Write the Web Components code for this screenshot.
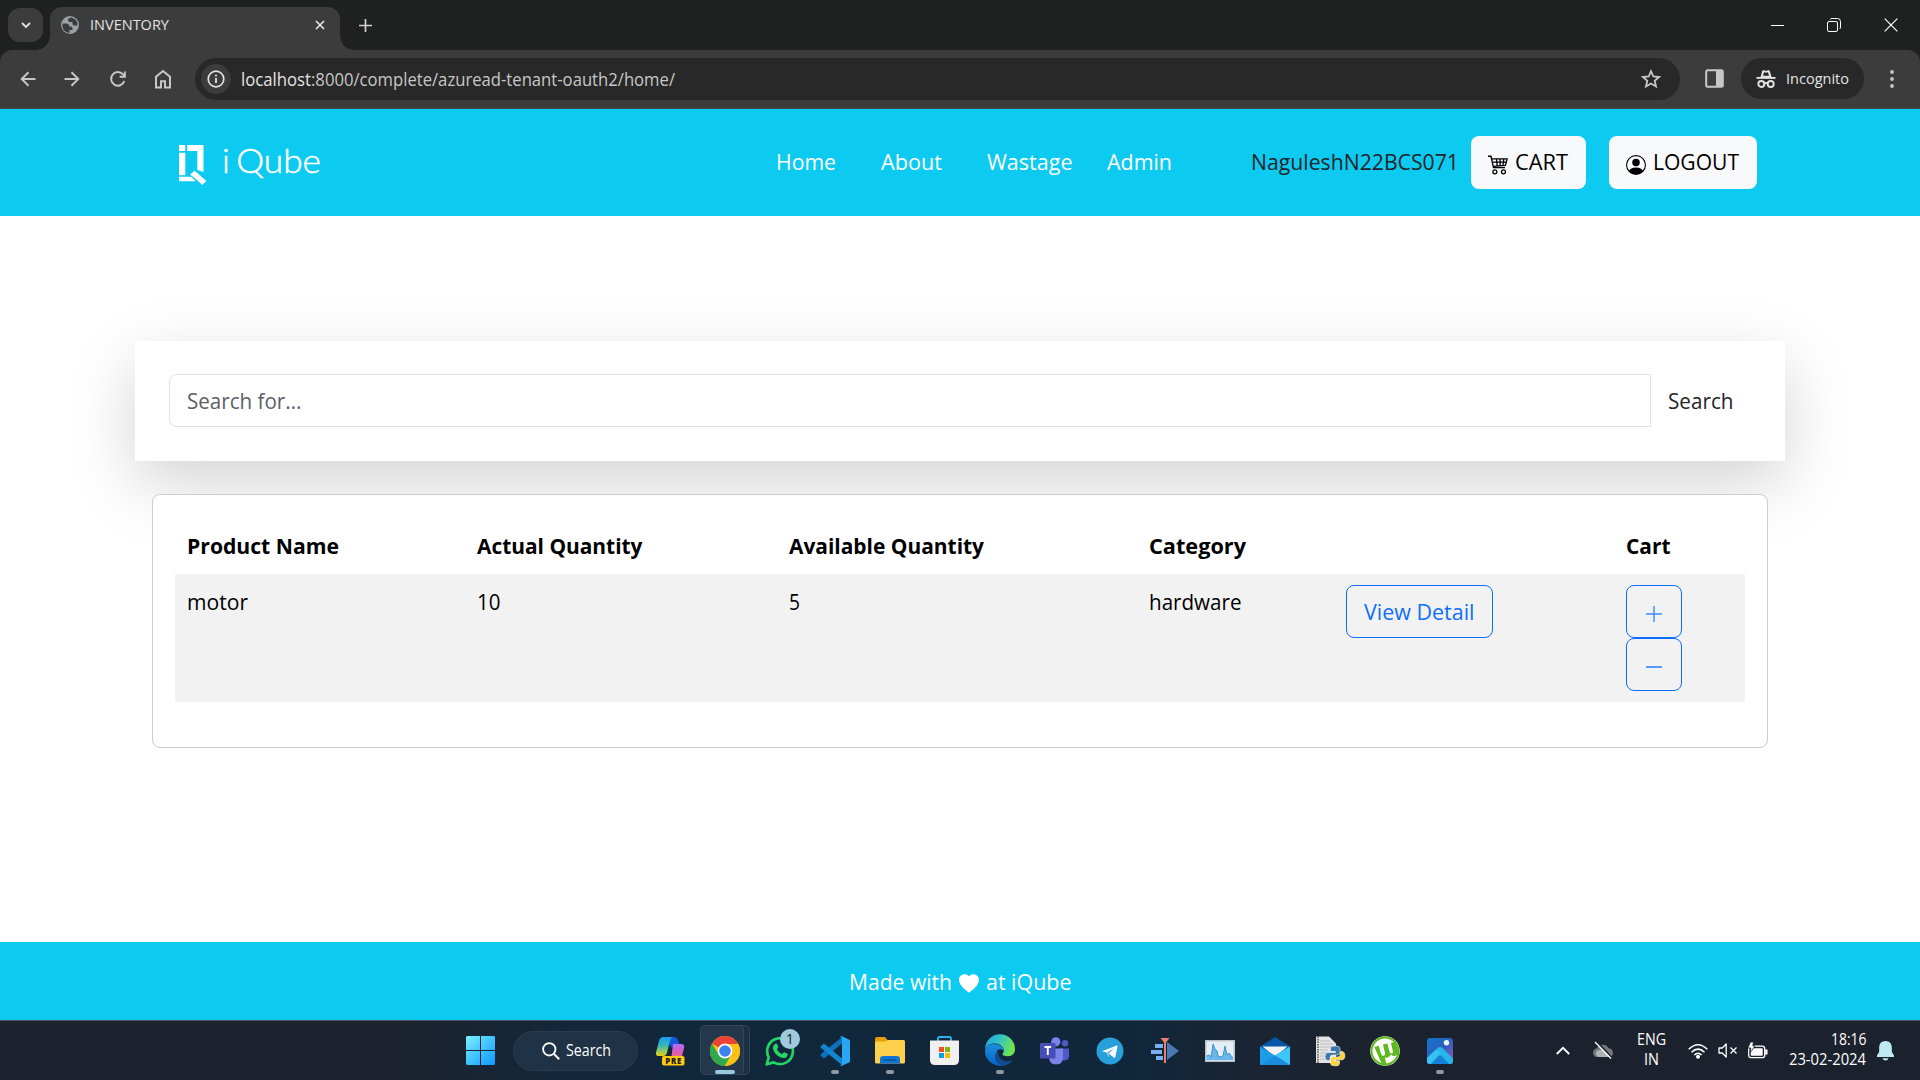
<!DOCTYPE html>
<html lang="en">
<head>
<meta charset="utf-8">
<title>INVENTORY</title>
<style>
html,body{margin:0;padding:0}
body{width:1920px;height:1080px;overflow:hidden;background:#fff;font-family:"Open Sans","Noto Sans",sans-serif}
</style>
</head>
<body>
<app-desktop></app-desktop>
<script>
const make = (name, html, init) => {
  const t = document.createElement('template');
  t.innerHTML = html;
  customElements.define(name, class extends HTMLElement {
    connectedCallback() {
      if (this.shadowRoot) return;
      this.attachShadow({mode: 'open'}).append(t.content.cloneNode(true));
      if (init) init.call(this, this.shadowRoot);
    }
  });
};

/* name: [viewBox width, viewBox height, markup]; drawn at that size unless w/h are given */
const ICONS = {
  chev: [10, 7, '<path d="M1 1l4 4 4-4" fill="none" stroke="#e3e3e3" stroke-width="1.8"/>'],
  globe: [18, 18, '<circle cx="9" cy="9" r="9" fill="#9aa0a6"/><path d="M1.800 7.500h3.700q2.500 0 2.500 2v1h2q1.500.3 1.500 2v1.500H8.500V17Q2 16.300 1.200 9.500zM10.500 1.500Q7 2 7 4t2 2h2.500v2q.3 1.500 2 1.500h3q.5-6-6-8z" fill="#3c3c3c"/>'],
  x: [10, 10, '<path d="M1 1l8 8M9 1l-8 8" stroke="#e3e3e3" stroke-width="1.7"/>'],
  plus: [13, 13, '<path d="M6.500 0v13M0 6.500h13" stroke="#d0d0d0" stroke-width="1.700"/>'],
  min: [13, 13, '<path d="M0 6.500h13" stroke="#fff"/>'],
  max: [14, 14, '<rect x=".5" y="3.500" width="10" height="10" rx="1.500" fill="none" stroke="#fff"/><path d="M3 1.500q.5-1 2-1h5.500q3 0 3 3V9q0 1.500-1 2" fill="none" stroke="#fff"/>'],
  close: [14, 14, '<path d="M.7.7l12.600 12.600M13.300.7L.7 13.300" stroke="#fff" stroke-width="1.200"/>'],
  back: [16, 16, '<path d="M15.500 8H2M8.500 1.300L1.700 8l6.800 6.700" fill="none" stroke="#c7c7c7" stroke-width="1.900"/>'],
  fwd: [16, 16, '<path d="M.5 8H14M7.500 1.300L14.300 8l-6.800 6.700" fill="none" stroke="#c7c7c7" stroke-width="1.900"/>'],
  reload: [18, 18, '<path d="M15.300 11.200A6.800 6.800 0 1 1 14 4.400l2 2" fill="none" stroke="#c7c7c7" stroke-width="2"/><path d="M16.800 1.500v6.200h-6.200v-1.900h4.300V1.500z" fill="#c7c7c7"/>'],
  home: [18, 20, '<path d="M2 18.500V7.700L9 2l7 5.700v10.800h-5v-6.300H7v6.300z" fill="none" stroke="#c7c7c7" stroke-width="2"/>'],
  info: [18, 18, '<circle cx="9" cy="9" r="7.800" fill="none" stroke="#e3e3e3" stroke-width="1.700"/><path d="M9 8v5M9 4.700v1.900" stroke="#e3e3e3" stroke-width="1.800"/>'],
  star: [20, 20, '<path d="M10 2.200l2.300 5.300 5.800.5-4.400 3.800 1.300 5.700-5-3-5 3 1.300-5.700L1.900 8l5.800-.5z" fill="none" stroke="#c7c7c7" stroke-width="1.800"/>'],
  panel: [19, 19, '<rect x="1.200" y="1.200" width="16.600" height="16.600" rx="1.500" fill="none" stroke="#c7c7c7" stroke-width="2"/><path d="M11 1h7v17h-7z" fill="#c7c7c7"/>'],
  incog: [20, 20, '<path d="M4.500 8l1.700-6Q6.600.8 8 1.300l2 .6 2-.6q1.400-.5 1.800.7l1.700 6z" fill="#e3e3e3"/><path d="M8 3.200l2 .6 2-.6 1 3.600H7z" fill="#282828"/><path d="M.5 8.900h19" stroke="#e3e3e3" stroke-width="1.900"/><g fill="none" stroke="#e3e3e3" stroke-width="1.900"><circle cx="5.300" cy="15" r="3"/><circle cx="14.700" cy="15" r="3"/><path d="M8.200 14.600q1.800-1.200 3.600 0"/></g>'],
  dots: [4, 18, '<g fill="#c7c7c7"><circle cx="2" cy="2" r="1.900"/><circle cx="2" cy="9" r="1.900"/><circle cx="2" cy="16" r="1.900"/></g>'],
  mark: [28, 40, '<path d="M0 0h6.300v6H0zM0 7.800h6.300v22.500H0zM8.200 0H24.500v27l-6.200-2V6H8.200zM0 31.800h12l5 4.500H0z" fill="#fff"/><path d="M11 29.500l4.500-3.700 4 3.200 7.800 7-4 4-6-5.500z" fill="#fff"/>'],
  cart: [19, 19, '<path d="M0 1.200h2.800L5.200 12h11M3.400 3.700h14.800L16.500 9.800l-11.600 1M8 3.700l.8 6.800M11.500 3.700v6.500M15 3.700l-.8 6.300M4 6.800h13" fill="none" stroke="#000" stroke-width="1.250"/><circle cx="6.500" cy="16" r="1.900" fill="none" stroke="#000" stroke-width="1.200"/><circle cx="14.700" cy="16" r="1.900" fill="none" stroke="#000" stroke-width="1.200"/>'],
  person: [16, 16, '<path d="M11 6a3 3 0 1 1-6 0 3 3 0 0 1 6 0"/><path fill-rule="evenodd" d="M0 8a8 8 0 1 1 16 0A8 8 0 0 1 0 8m8-7a7 7 0 0 0-5.468 11.370C3.242 11.226 4.805 10 8 10s4.757 1.225 5.468 2.370A7 7 0 0 0 8 1"/>'],
  add: [16, 16, '<path d="M8 0v16M0 8h16" stroke="#3f8afc" stroke-width="1.400"/>'],
  sub: [16, 16, '<path d="M0 8h16" stroke="#3f8afc" stroke-width="1.700"/>'],
  heart: [20, 19, '<path d="M10 18.800C7.500 16.800 0 12 0 5.600 0 1.200 5.800-2 10 2.300 14.200-2 20 1.200 20 5.600c0 6.400-7.500 11.200-10 13.200z" fill="#fff"/>'],
  win: [29, 29, '<defs><linearGradient id="g" x2="1" y2="1" gradientUnits="userSpaceOnUse" gradientTransform="scale(29)"><stop stop-color="#7af0ff"/><stop offset="1" stop-color="#0c97ff"/></linearGradient></defs><path d="M1 0h13v14H0V1zM15 0h13l1 1v13H15zM0 15h14v14H1l-1-1zM15 15h14v13l-1 1H15z" fill="url(#g)"/>'],
  mag: [18, 18, '<circle cx="7.300" cy="7.300" r="6.200" fill="none" stroke="#fff" stroke-width="1.800"/><path d="M12 12l5.200 5.200" stroke="#fff" stroke-width="2"/>'],
  copilot: [30, 30, '<defs><linearGradient id="a" x2="0" y2="1"><stop stop-color="#199cf0"/><stop offset=".45" stop-color="#35b8b5"/><stop offset="1" stop-color="#e8d20d"/></linearGradient><linearGradient id="b" x2="0" y2="1"><stop stop-color="#b16af8"/><stop offset=".6" stop-color="#e55da5"/><stop offset="1" stop-color="#ff9a60"/></linearGradient></defs><path d="M8.500 1H19q3 0 4 3l1.500 4.500h-5L17 12z" fill="#1157d8"/><path d="M8.500 1H18q-2.200 1-3 4l-3 11.500Q11 20 8 20H3.500Q.5 20 1 16.500L4 5q1-4 4.500-4z" fill="url(#a)"/><path d="M18 8h8.500q3.200 0 2.700 3.500L27 20q-1 4-4 5h-9q2-1 2.500-4z" fill="url(#b)"/><rect x="7" y="20" width="22.500" height="9.500" rx="1.800" fill="#ffc90e"/><text x="18.300" y="27.600" text-anchor="middle" font-family="Open Sans" font-weight="800" font-size="7.800" textLength="16" fill="#1c1c1c">PRE</text>'],
  chrome: [30, 30, '<circle cx="15" cy="15" r="15" fill="#fbc116"/><path d="M15 15L2 7.500A15 15 0 0 1 28 7.500z" fill="#ea4335"/><path d="M2 7.500A15 15 0 0 0 15 30l6.300-11.200L15 15 8.800 18.800z" fill="#2da94f"/><path d="M15 8h13.300A15 15 0 0 1 15 30l6.200-11.200z" fill="#fbc116"/><circle cx="15" cy="15" r="7.400" fill="#fff"/><circle cx="15" cy="15" r="5.800" fill="#3b82f0"/>'],
  whats: [30, 30, '<path d="M1.700 28.300l2-7A12.900 12.900 0 1 1 8.700 26.400z" fill="none" stroke="#25d366" stroke-width="2.700" stroke-linejoin="round"/><path d="M9.600 8.300c1-1.300 2.200-1 2.700.1l1 2.400c.3.900-1 1.800-1.200 2.600 1 2.200 2.800 3.600 5 4.500.8-.2 1.500-1.900 2.300-1.600l2.600 1.300c1 .6.700 1.700.1 2.800-1.500 2-4.300 1.900-7.200.6-3.600-1.600-6.300-5-7-8.500-.1-1.500.7-3.300 1.700-4.200z" fill="#25d366"/>'],
  code: [30, 30, '<path d="M22 1v6.500L4 22.500l-3-2.500q-1-1 0-2z" fill="#0a72bd"/><path d="M22 29v-6.500L4 7.500 1 10q-1 1 0 2z" fill="#1185d0"/><path d="M21.500 0L29 3.600Q30 4 30 5v20q0 1-1 1.500L21.500 30q-.8 0-1.500-1 2 .5 2-1.500v-25Q22 .5 20 1q.7-1 1.500-1z" fill="#2aa6f2"/>'],
  files: [30, 27, '<path d="M0 2q0-2 2-2h8l3 3.500h0L10 8H0z" fill="#e2a006"/><path d="M0 6q0-1.500 1.500-1.500H10L13 3h15.500Q30 3 30 4.500V25q0 1.500-1.500 1.500h-27Q0 26.500 0 25z" fill="#ffd04c"/><path d="M5 26.500V22q0-3 3-3h14q3 0 3 3v4.500z" fill="#1075d3"/><path d="M8.500 23h13" stroke="#0a4d96" stroke-width="1.300"/>'],
  store: [29, 29, '<path d="M8 6V2.500Q8 1 9.500 1h10Q21 1 21 2.500V6" fill="none" stroke="#2bb1ea" stroke-width="1.900"/><path d="M0 4.500h29V24q0 5-5 5H5q-5 0-5-5z" fill="#f0f0f1"/><path d="M9 11h5v5H9z" fill="#f25022"/><path d="M15 11h5v5h-5z" fill="#7fba00"/><path d="M9 17h5v5H9z" fill="#00a4ef"/><path d="M15 17h5v5h-5z" fill="#ffb900"/>'],
  edge: [30, 30, '<defs><linearGradient id="c" x2="1" y2=".3"><stop stop-color="#259fe5"/><stop offset=".5" stop-color="#2fc3c8"/><stop offset="1" stop-color="#70e253"/></linearGradient><linearGradient id="d" x2="0" y2="1"><stop stop-color="#1b8fde"/><stop offset="1" stop-color="#0b62c4"/></linearGradient></defs><path d="M0 13A15 15 0 0 1 30 13.500c0 4-3 6.700-7 6.700-4 0-5.800-1.200-5.500-2.200.4-1 1.500-1.700 1.200-4C18 10 14 7.500 9.500 7.500 4.500 7.500 1 10 0 13z" fill="url(#c)"/><path d="M0 14.500C.2 10.500 4.500 8 9 8c5.500 0 9.500 3 9.700 6.500-4-3-7.500-.5-7.500 3.700C11.200 24 17 29 23 27.500A15 15 0 0 1 0 14.500z" fill="url(#d)"/><path d="M13.500 15.500c-1.500 5 3.500 10.500 10 9.800 1.700-.2 3.400-1 4.300-1.300-2 3.300-6 5.600-10 6C12 29 8.500 22 10.500 17.500c.7-1.500 2-2.200 3-2z" fill="#114b91"/>'],
  teams: [30, 28, '<circle cx="25" cy="6.300" r="3.200" fill="#5059c9"/><path d="M20 11.500h9V20q-1 3.500-5 3.500h-4z" fill="#5059c9"/><circle cx="15.800" cy="4.800" r="4.600" fill="#7b83eb"/><path d="M9 11.500h14V20q0 7.500-7 7.500T9 20z" fill="#7b83eb"/><rect x="0" y="6" width="15.500" height="15.500" rx="1.200" fill="#464eb8"/><path d="M4.500 10h6.600M7.800 10v8" stroke="#fff" stroke-width="1.900"/>'],
  tele: [28, 28, '<circle cx="14" cy="14" r="13.500" fill="#28a0dc"/><path d="M6 14.300L20.800 8.500q1-.3.700 1L19.300 20q-.3 1.500-1.500.6l-5.200-4.200 5.700-5.500-7.200 4.800L6 14.300z" fill="#fff"/><path d="M11 15.500l1.600 1 .2 2.800-.6.700z" fill="#c8daea"/>'],
  step: [28, 25, '<path d="M16 4l12 9-12 9z" fill="#4a79b5"/><path d="M4 6h8v4H4zM0 12h11v4H0zM5 18h7v4H5z" fill="#76b0f2"/><path d="M9.500 0h9L15 4.500V25h-2V4.500z" fill="#ed7f6e"/>'],
  perf: [30, 22, '<rect x=".7" y=".7" width="28.600" height="20.600" fill="#e5edf5" stroke="#b7c0c9" stroke-width="1.400"/><path d="M1.500 16l3-1 1.700 2L8 4l2 5 2 2 1 5 3 1 2-1 2-10 2 9 2-2 3 4 1-1v4H1.500z" fill="#6ab5e9"/><path d="M1.500 16l3-1 1.700 2L8 4l2 5 2 2 1 5 3 1 2-1 2-10 2 9 2-2 3 4" fill="none" stroke="#338bcc" stroke-width=".9"/>'],
  mail: [30, 28, '<path d="M0 9.500L15 0l15 9.500V13H0z" fill="#0759a7"/><path d="M2.500 9.500h25L15 20z" fill="#f3f3f3"/><path d="M0 9.500L15 18.500 30 9.500V28H0z" fill="#1a9ee8"/><path d="M30 9.500V28L15 18.500z" fill="#3fc5f3"/><path d="M0 28l15-9.500L30 28z" fill="#1a8bdd"/>'],
  py: [30, 30, '<path d="M1 .5h13l7 7V27H1z" fill="#e4e4e4"/><path d="M3 .5V27" stroke="#555" stroke-width="1.500" stroke-dasharray="1.500 1"/><path d="M5 5h10M5 8h13M5 11h14M5 14h8M5 17h6M5 20h6M5 23h7" stroke="#bdbdbd"/><path d="M19.500 10c-4 0-4 1.500-4 4v1.500h5v1H13c-4 0-4 8 0 8h2v-2.500q0-3 3-3h4.500q2.500 0 2.500-2.500V13c0-2.500-2-3-5.500-3z" fill="#3a78aa" stroke="#f2f2f2" stroke-width=".7"/><path d="M20.500 29.800c4 0 4-1.500 4-4v-1h-5v-1H27c4 0 3.500-8.300 0-8.300h-1.500V18q0 3-3 3H18q-2.500 0-2.500 2.500V27c0 2.300 2 2.800 5 2.800z" fill="#ffd53e" stroke="#f2f2f2" stroke-width=".7"/>'],
  torrent: [30, 30, '<circle cx="15" cy="15" r="14.800" fill="#fff"/><circle cx="15" cy="15" r="13.500" fill="none" stroke="#5eb91e" stroke-width="2"/><path d="M4.300 11l4.500-1.200 2.200 8c1 3 4.500 2.500 4-.5L13 8.600l4.300-1.100 2.400 8.500c.8 2.500 3.600 1.800 3.200-.8l-2-8.200 4.300-1.200 3.300 10.500c-.5 2.700-2.500 3.600-4.500 3.700-1.400 0-2.500-.5-3.200-1.400-1 2.400-3.300 3.600-6 3l1.700 6.400-4.700-.3z" fill="#5eb91e"/>'],
  photos: [26, 26, '<defs><linearGradient id="e" x2="1" y2="1"><stop stop-color="#1275cc"/><stop offset=".5" stop-color="#2c5ebd"/><stop offset="1" stop-color="#a654b8"/></linearGradient></defs><rect width="26" height="26" rx="3" fill="url(#e)"/><path d="M0 20L10.500 10q2.500-2.200 5 0L26 20.500V23q0 3-3 3H3q-3 0-3-3z" fill="#26b4ea"/><path d="M0 20L9 11.500 14 15 3 26q-3 0-3-3z" fill="#36c3f2"/><path d="M4 26l7.500-8q1.500-1.300 3 0L22 26z" fill="#1580d8"/><circle cx="19.500" cy="4.800" r="2.700" fill="#e6f5ff"/>'],
  up: [14, 9, '<path d="M.8 8L7 1.800 13.200 8" fill="none" stroke="#fff" stroke-width="1.900"/>'],
  cloud: [22, 17, '<path d="M5 15a4.300 4.300 0 0 1-.5-8.500A7 7 0 0 1 17 6.500 4.300 4.300 0 0 1 17.500 15z" fill="#75797f"/><path d="M8 15a3.800 3.800 0 0 1-4-3.500Q4 8 8 8q4-1 7 2.500l4.500 3Q19 15 17.500 15z" fill="#b0b3b6"/><path d="M4.500-.5L20 16" stroke="#1c222e" stroke-width="2"/><path d="M3 0L19 16.500" stroke="#fff" stroke-width="1.300"/>'],
  wifi: [20, 16, '<g fill="none" stroke="#fff" stroke-width="1.500"><path d="M.7 6.300q9.300-9 18.600 0M3.500 9.300q6.500-6.300 13 0M6.300 12q3.700-3.600 7.400 0"/></g><circle cx="10" cy="13.700" r="2" fill="#fff"/>'],
  vol: [20, 15, '<path d="M1 5h3.200l4-4v13l-4-4H1z" fill="none" stroke="#fff" stroke-width="1.300" stroke-linejoin="round"/><path d="M12.500 4.500l6 6M18.500 4.500l-6 6" stroke="#fff" stroke-width="1.300"/>'],
  bat: [21, 17, '<rect x="1.700" y="4.200" width="16" height="11.500" rx="2.500" fill="none" stroke="#fff" stroke-width="1.300"/><rect x="3.700" y="6.200" width="12" height="7.500" rx="1" fill="#fff"/><path d="M18.500 7.800h1.700v4.500h-1.700z" fill="#fff" stroke="#fff" stroke-width=".6"/><path d="M3.500 0h3L5.700 3.800H8L3 11l.8-5H.8z" fill="#fff" stroke="#1c222e" stroke-width=".8"/>'],
  bell: [17, 20, '<path d="M8.500 0C4.500 0 2.200 2.800 2.200 6.500v4.300L0 14.500V16h17v-1.500l-2.200-3.700V6.500C14.800 2.800 12.500 0 8.500 0zM5.500 17.300h6q-.7 2.200-3 2.200t-3-2.200z" fill="#c0eaf2"/>']
};
customElements.define('ui-icon', class extends HTMLElement {
  connectedCallback() {
    if (this.shadowRoot) return;
    const [vw, vh, body] = ICONS[this.getAttribute('name')];
    const w = this.getAttribute('w') || vw, h = this.getAttribute('h') || vh;
    this.attachShadow({mode: 'open'}).innerHTML =
      `<style>:host{display:block;flex:none;width:${w}px;height:${h}px}svg{display:block;overflow:visible}</style><svg width="${w}" height="${h}" viewBox="0 0 ${vw} ${vh}">${body}</svg>`;
  }
});

make('browser-chrome', `<style>
:host{display:block;height:109px;background:#1f2120;color:#e3e3e3}
.strip{display:flex;height:50px;align-items:flex-start;box-sizing:border-box;padding:8px 22px 0 8px}
.drop{width:35px;height:34px;border-radius:12px;background:#3c3c3c;display:grid;place-items:center}
.tab{position:relative;margin:-1px 0 0 7px;width:290px;height:43px;background:#3c3c3c;border-radius:12px 12px 0 0;display:flex;align-items:center;padding:0 15px 7px 11px;box-sizing:border-box;font-size:14.500px}
.tab::before,.tab::after{content:"";position:absolute;bottom:0;width:14px;height:14px}
.tab::before{left:-14px;background:radial-gradient(circle at 0 0,transparent 13.500px,#3c3c3c 14px)}
.tab::after{right:-14px;background:radial-gradient(circle at 100% 0,transparent 13.500px,#3c3c3c 14px)}
.tab fit-text{margin:0 auto 0 11px}
.newtab{margin:11px auto 0 19px}
.win{display:flex;align-items:center;gap:43px;height:34px}
.bar{display:flex;align-items:center;height:59px;box-sizing:border-box;background:#3c3c3c;border-radius:12px 12px 0 0;padding:0 26px 1px 20px;border-bottom:1px solid #484848}
.url{margin-left:23px;width:1486px;height:42px;border-radius:21px;background:#282828;display:flex;align-items:center;padding:0 19px 0 6px;box-sizing:border-box;font-size:17.500px}
.info{width:30px;height:30px;border-radius:50%;background:#3c3c3c;display:grid;place-items:center;margin-right:10px}
.url .path{margin-right:auto;color:#c7c7c7}
.priv{width:123px;height:41px;border-radius:21px;background:#282828;display:flex;align-items:center;margin:0 26px 0 17px;padding-left:15px;box-sizing:border-box;gap:10px;font-size:14.800px}
.priv fit-text{margin-top:-2px}
</style>
<div class="strip"><div class="drop"><ui-icon name="chev"></ui-icon></div>
<div class="tab"><ui-icon name="globe"></ui-icon><fit-text w="79">INVENTORY</fit-text><ui-icon name="x"></ui-icon></div>
<ui-icon class="newtab" name="plus"></ui-icon>
<div class="win"><ui-icon name="min"></ui-icon><ui-icon name="max"></ui-icon><ui-icon name="close"></ui-icon></div></div>
<div class="bar"><ui-icon name="back"></ui-icon><ui-icon name="fwd" style="margin-left:28px"></ui-icon><ui-icon name="reload" style="margin-left:29px"></ui-icon><ui-icon name="home" style="margin-left:27px"></ui-icon>
<div class="url"><div class="info"><ui-icon name="info"></ui-icon></div><fit-text w="70">localhost</fit-text><fit-text class="path" w="364">:8000/complete/azuread-tenant-oauth2/home/</fit-text><ui-icon name="star"></ui-icon></div>
<ui-icon name="panel" style="margin-left:25px"></ui-icon>
<div class="priv"><ui-icon name="incog"></ui-icon><fit-text w="63">Incognito</fit-text></div>
<ui-icon name="dots"></ui-icon></div>`);

make('site-nav', `<style>
:host{display:flex;align-items:center;height:107px;background:#0dcaf0;color:#fff;font-size:21.500px;padding-left:179px;box-sizing:border-box}
.word{font:300 33px/30px "Lato",sans-serif;margin:-5px 455px 0 15px;-webkit-text-stroke:.5px #fff}
.word span{margin-right:6px}
fit-text{margin-top:-2px}
light-button fit-text{margin-top:-2px}
.user{color:#212529;margin:-2px 12px 0 79px}
</style>
<ui-icon name="mark" style="margin-top:5px"></ui-icon><fit-text class="word" w="99"><span>i</span>Qube</fit-text>
<fit-text w="60">Home</fit-text><fit-text w="61" style="margin-left:45px">About</fit-text><fit-text w="85.500" style="margin-left:45px">Wastage</fit-text><fit-text w="65" style="margin-left:34px">Admin</fit-text>
<fit-text class="user" w="208">NaguleshN22BCS071</fit-text>
<light-button w="115" icon="cart" iw="20" gap="7"><fit-text w="53">CART</fit-text></light-button>
<light-button w="148" icon="person" iw="20" gap="7" style="margin-left:23px"><fit-text w="86">LOGOUT</fit-text></light-button>`);

make('light-button', `<style>
:host{display:flex;align-items:center;height:53px;box-sizing:border-box;border-radius:8px;background:#f8f9fa;color:#000;padding-left:17px}
div{margin-top:5px}
</style><div></div><slot></slot>`, function (r) {
  this.style.width = this.getAttribute('w') + 'px';
  const s = this.getAttribute('iw');
  const d = r.querySelector('div');
  d.style.marginRight = this.getAttribute('gap') + 'px';
  d.innerHTML = `<ui-icon name="${this.getAttribute('icon')}" w="${s}" h="${s}"></ui-icon>`;
});

make('search-panel', `<style>
:host{display:flex;box-sizing:border-box;width:1650px;height:120px;margin:125px 0 0 135px;padding:33px 34px 34px;background:#fff;box-shadow:0 22px 66px rgba(0,0,0,.175);font-size:21.500px}
.field{width:1482px;height:53px;box-sizing:border-box;border:1px solid #dee2e6;border-radius:8px 0 0 8px;display:flex;align-items:center;padding-left:17px;color:#5c6066}
.go{display:flex;align-items:center;padding-left:17px;color:#212529}
</style><div class="field"><fit-text w="114.500">Search for...</fit-text></div><div class="go"><fit-text w="65.500">Search</fit-text></div>`);

make('outline-button', `<style>
:host{display:flex;align-items:center;justify-content:center;box-sizing:border-box;height:53px;width:56px;border:1.400px solid #0d6efd;border-radius:8px;color:#0d6efd}
:host([wide]){width:147px}
</style><slot></slot>`);

make('product-table', `<style>
:host{display:block;box-sizing:border-box;position:relative;width:1616px;height:254px;margin:33px 0 0 152px;border:1px solid #cacbcc;border-radius:8px;background:#fff;padding:24px 22px;font-size:21.500px;color:#000}
.row{display:grid;grid-template-columns:290px 312px 360px 197px 280px 131px}
.row>*{padding-left:11.500px}
.head{font-weight:700;height:55px;align-items:center}
.head>fit-text{margin-top:-2px}
.body{height:128px;background:#f2f2f2;box-sizing:border-box;padding-top:11px}
.body>fit-text{margin-top:2px}
.steps{display:flex;flex-direction:column}
</style>
<div class="row head"><fit-text w="152">Product Name</fit-text><fit-text w="165.500">Actual Quantity</fit-text><fit-text w="195">Available Quantity</fit-text><fit-text w="97">Category</fit-text><span></span><fit-text w="44.500">Cart</fit-text></div>
<div class="row body"><fit-text w="61">motor</fit-text><fit-text w="23.500">10</fit-text><fit-text w="11">5</fit-text><fit-text w="92.500">hardware</fit-text>
<div><outline-button wide><fit-text w="110.500">View Detail</fit-text></outline-button></div>
<div class="steps"><outline-button><ui-icon name="add" style="margin-top:5px"></ui-icon></outline-button><outline-button><ui-icon name="sub" style="margin-top:5px"></ui-icon></outline-button></div></div>`);

make('site-footer', `<style>
:host{display:flex;align-items:center;justify-content:center;box-sizing:border-box;margin-top:194px;height:78px;background:#0dcaf0;color:#fff;font-size:21.500px;padding-left:1px;gap:7px}
fit-text{margin-top:2px}
</style><fit-text w="103">Made with</fit-text><ui-icon name="heart" style="margin-top:4px"></ui-icon><fit-text w="85.500">at iQube</fit-text>`);

make('task-app', `<style>
:host{position:relative;display:grid;place-items:center;width:55px;height:59px;flex:none}
i{position:absolute;left:24px;top:49px;width:8px;height:4px;border-radius:2px;background:#8f98a2;display:none}
:host([run]) i{display:block}
:host([active]) i{display:block;left:18px;width:20px;background:#98c9de}
.bg{position:absolute;display:none;left:3px;top:4px;width:44px;height:50px;box-sizing:border-box;border-radius:5px;background:#23384b;border:1px solid #31465a}
.edge{left:12px;width:41px;background:#1b3044}
:host([active]) .bg{display:block}
::slotted(ui-icon){position:relative}
</style><div class="bg edge"></div><div class="bg"></div><slot></slot><i></i>`);

make('task-bar', `<style>
:host{display:flex;align-items:center;box-sizing:border-box;height:60px;border-top:1px solid #4b5158;background:linear-gradient(90deg,#1c222d 0,#1c222d 380px,#14273a 560px,#10273c 700px,#10273b 1130px,#1a2433 1260px,#1c222d 1400px);color:#fff;padding-left:466px;font-size:15.500px}
.search{display:flex;align-items:center;margin:0 4px 0 18px;width:125px;height:40px;border-radius:20px;box-sizing:border-box;padding-left:28px;gap:6px;background:#203346;border:1px solid #2a3d50}
.search fit-text{margin-top:-2px}
.badge{position:absolute;left:28px;top:8px;width:20px;height:20px;border-radius:50%;background:#9fc9dc;color:#16242f;display:grid;place-items:center;font-size:14.500px;line-height:20px}
.tray{display:flex;align-items:center;margin-left:100px}
.lines{display:flex;flex-direction:column;margin-top:-3px}
.lines fit-text{line-height:20px}
</style>
<ui-icon name="win"></ui-icon><div class="search"><ui-icon name="mag"></ui-icon><fit-text w="45">Search</fit-text></div>
<task-app><ui-icon name="copilot"></ui-icon></task-app>
<task-app active><ui-icon name="chrome"></ui-icon></task-app>
<task-app><ui-icon name="whats"></ui-icon><span class="badge">1</span></task-app>
<task-app run><ui-icon name="code"></ui-icon></task-app>
<task-app run><ui-icon name="files"></ui-icon></task-app>
<task-app><ui-icon name="store"></ui-icon></task-app>
<task-app run><ui-icon name="edge"></ui-icon></task-app>
<task-app><ui-icon name="teams"></ui-icon></task-app>
<task-app><ui-icon name="tele"></ui-icon></task-app>
<task-app><ui-icon name="step"></ui-icon></task-app>
<task-app><ui-icon name="perf"></ui-icon></task-app>
<task-app><ui-icon name="mail"></ui-icon></task-app>
<task-app><ui-icon name="py"></ui-icon></task-app>
<task-app><ui-icon name="torrent"></ui-icon></task-app>
<task-app run><ui-icon name="photos"></ui-icon></task-app>
<div class="tray"><ui-icon name="up" style="margin-left:-11px"></ui-icon><ui-icon name="cloud" style="margin-left:22px"></ui-icon>
<div class="lines" style="align-items:center;margin-left:23px"><fit-text w="29">ENG</fit-text><fit-text w="15">IN</fit-text></div>
<ui-icon name="wifi" style="margin-left:22px"></ui-icon><ui-icon name="vol" style="margin-left:10px"></ui-icon><ui-icon name="bat" style="margin-left:9px"></ui-icon>
<div class="lines" style="align-items:flex-end;margin-left:21px"><fit-text w="35.500">18:16</fit-text><fit-text w="77">23-02-2024</fit-text></div>
<ui-icon name="bell" style="margin-left:11px"></ui-icon></div>`);

make('app-desktop', `<style>:host{display:flex;flex-direction:column;width:1920px;height:1080px;overflow:hidden;background:#fff}
:host>*{flex:none}</style>
<browser-chrome></browser-chrome><site-nav></site-nav><search-panel></search-panel><product-table></product-table><site-footer></site-footer><task-bar></task-bar>`);

/* A label condensed or widened to the width given in w. */
make('fit-text', `<style>:host{display:block;flex:none;white-space:nowrap;line-height:30px}
span{display:inline-block;transform-origin:0 50%}</style><span><slot></slot></span>`, function (r) {
  const s = r.querySelector('span'), w = +this.getAttribute('w');
  const natural = s.getBoundingClientRect().width;
  if (!this.parentNode.classList || !this.parentNode.classList.contains('row')) this.style.width = w + 'px';
  s.style.transform = `scaleX(${w / natural})`;
});
</script>
</body>
</html>
